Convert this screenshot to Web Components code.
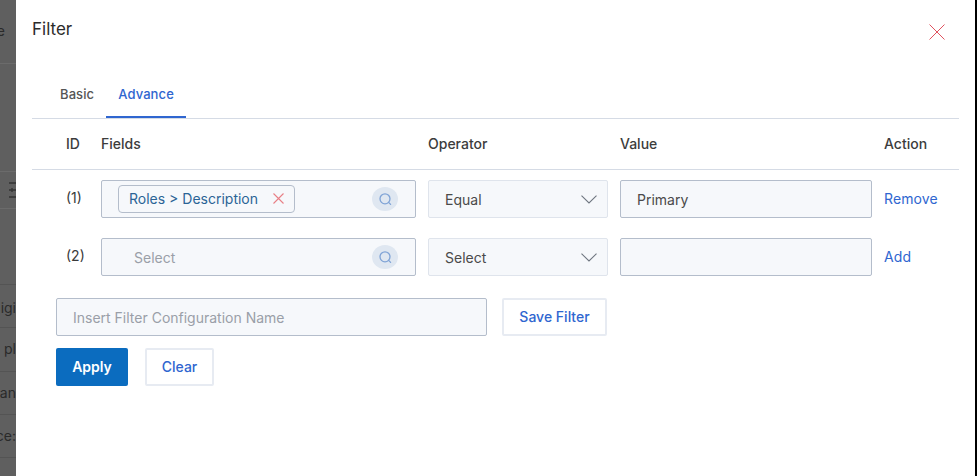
<!DOCTYPE html>
<html>
<head>
<meta charset="utf-8">
<title>Filter</title>
<style>
  html, body { margin: 0; padding: 0; height: 100%; overflow: hidden; background: #000; }
  body { font-family: Inter, "Liberation Sans", sans-serif; }
</style>
</head>
<body>
<filter-page>
  <filter-modal heading="Filter">
    <filter-tabs></filter-tabs>
    <filter-table></filter-table>
    <save-row></save-row>
  </filter-modal>
</filter-page>

<script>
const SEARCH_ICON = `<svg width="15" height="15" viewBox="0 0 15 15" fill="none" stroke="#7fa3d6" stroke-width="1.3"><circle cx="7" cy="6.8" r="5"/><path d="M10.6 10.4l2 2" stroke-linecap="round"/></svg>`;
const CHEVRON = `<svg width="16" height="9" viewBox="0 0 16 9" fill="none" stroke="#6f7680" stroke-width="1.1"><path d="M.5.7L8 8l7.5-7.300"/></svg>`;

class FilterPage extends HTMLElement {
  constructor() {
    super();
    this.shadowDOM = this.attachShadow({ mode: 'open' });
    this.shadowDOM.innerHTML = `
      <style>
        :host { display: flex; width: 977px; height: 476px; background: #000; overflow: hidden; }
        .behind { width: 16px; flex: none; background: #5f5f5f; color: #2a2a2a; font: 14px Inter, sans-serif; overflow: hidden; display: flex; flex-direction: column; }
        .cell { box-sizing: border-box; border-bottom: 1px solid #6b6b6b; white-space: nowrap; display: flex; align-items: center; justify-content: flex-end; overflow: hidden; flex: none; }
        .dark { border-bottom-color: #545454; }
        .main { flex: none; width: 959px; }
      </style>
      <div class="behind">
        <div class="cell" style="height:64px;padding-right:11px;padding-bottom:3px">e</div>
        <div class="cell" style="height:108px"></div>
        <div class="cell" style="height:37px"><svg width="7" height="16" viewBox="0 0 7 16" fill="none" stroke="#333" stroke-width="1.4"><path d="M0 1h7M0 8h3M3 6v4M3 8h4M0 15h7"/></svg></div>
        <div class="cell dark" style="height:76px"></div>
        <div class="cell dark" style="height:43px;padding-top:3px">nigi</div>
        <div class="cell dark" style="height:44px;padding-bottom:3px">pl</div>
        <div class="cell dark" style="height:43px;padding-bottom:2px">an</div>
        <div class="cell dark" style="height:43px;padding-bottom:2px">ce:</div>
      </div>
      <div class="main"><slot></slot></div>`;
  }
}

class FilterModal extends HTMLElement {
  constructor() {
    super();
    this.shadowDOM = this.attachShadow({ mode: 'open' });
    this.shadowDOM.innerHTML = `
      <style>
        :host { display: block; height: 476px; background: #fff; padding: 0 16px; box-sizing: border-box; }
        header { height: 63px; display: flex; justify-content: space-between; }
        h1 { margin: 18px 0 0; font: 400 17px/22px Inter, sans-serif; color: #2b2b2b; }
        button { border: 0; background: none; padding: 0; margin: 24px 14px 0 0; width: 16px; height: 16px; }
      </style>
      <header>
        <h1>${this.getAttribute('heading')}</h1>
        <button aria-label="Close"><svg width="16" height="16" viewBox="0 0 16 16" stroke="#e0525f" stroke-width="1"><path d="M.5.5l15 15M15.500.5l-15 15"/></svg></button>
      </header>
      <slot></slot>`;
  }
}

class FilterTabs extends HTMLElement {
  constructor() {
    super();
    this.shadowDOM = this.attachShadow({ mode: 'open' });
    this.shadowDOM.innerHTML = `
      <style>
        :host { display: flex; height: 55px; border-bottom: 1px solid #d5dbe5; box-sizing: content-box; padding-left: 16px; font: 500 13px/16px Inter, sans-serif; letter-spacing: .1px; }
        div { padding: 23px 12px 0; color: #555; height: 55px; box-sizing: border-box; }
        .active { color: #2f66d0; border-bottom: 2px solid #2f66d0; }
      </style>
      <div>Basic</div><div class="active">Advance</div>`;
  }
}

class FilterTable extends HTMLElement {
  constructor() {
    super();
    this.shadowDOM = this.attachShadow({ mode: 'open' });
    this.shadowDOM.innerHTML = `
      <style>
        :host { display: block; font: 400 14px/18px Inter, sans-serif; color: #3a3a3a; }
        .grid { display: grid; grid-template-columns: 57px 315px 180px 252px 1fr; column-gap: 12px; align-items: center; }
        .head { height: 50px; border-bottom: 1px solid #d5dbe5; font-weight: 500; color: #3c3c3c; }
        .row { height: 38px; margin-top: 10px; }
        .row + .row { margin-top: 20px; }
        .id { padding-left: 34px; white-space: nowrap; }
        .row .id { margin-top: -2px; }
        .box { height: 38px; box-sizing: border-box; background: #f6f8fb; border: 1px solid #b4bdcb; border-radius: 2px; display: flex; align-items: center; justify-content: space-between; padding: 0 16px; color: #4a4a4a; }
        .label { padding-top: 1px; }
        .select { border-color: #dfe4ec; padding-right: 10px; }
        .fields { padding: 0 17px 0 16px; }
        .fields.empty { padding-left: 32px; color: #9a9fa8; }
        .round { width: 26px; height: 24px; border-radius: 50%; background: #dfe7f1; display: flex; align-items: center; justify-content: center; }
        .chip { display: flex; align-items: center; gap: 15px; height: 28px; box-sizing: border-box; border: 1px solid #b4bdcb; border-radius: 4px; padding: 0 10px; color: #2b6496; margin-top: -1px; }
        .action { color: #2f66d0; letter-spacing: .1px; margin-top: -1px; }
      </style>
      <div class="grid head">
        <div class="id">ID</div><div>Fields</div><div>Operator</div><div>Value</div><div>Action</div>
      </div>
      <div class="grid row">
        <div class="id">(1)</div>
        <div class="box fields">
          <span class="chip">Roles &gt; Description <svg width="11" height="11" viewBox="0 0 11 11" stroke="#e87f86" stroke-width="1.1"><path d="M.5.5l10 10M10.500.5l-10 10"/></svg></span>
          <span class="round">${SEARCH_ICON}</span>
        </div>
        <div class="box select"><span class="label">Equal</span> ${CHEVRON}</div>
        <div class="box"><span class="label">Primary</span></div>
        <div class="action">Remove</div>
      </div>
      <div class="grid row">
        <div class="id">(2)</div>
        <div class="box fields empty"><span class="label">Select</span> <span class="round">${SEARCH_ICON}</span></div>
        <div class="box select"><span class="label">Select</span> ${CHEVRON}</div>
        <div class="box"></div>
        <div class="action">Add</div>
      </div>`;
  }
}

class SaveRow extends HTMLElement {
  constructor() {
    super();
    this.shadowDOM = this.attachShadow({ mode: 'open' });
    this.shadowDOM.innerHTML = `
      <style>
        :host { display: block; padding: 22px 0 0 24px; font: 400 14px/18px Inter, sans-serif; }
        .top, .bottom { display: flex; }
        .top { gap: 15px; margin-bottom: 12px; }
        .bottom { gap: 17px; }
        .name { width: 431px; height: 38px; box-sizing: border-box; background: #f6f8fb; border: 1px solid #b4bdcb; border-radius: 2px; padding: 1px 16px 0; display: flex; align-items: center; color: #9a9fa8; }
        .btn { height: 38px; box-sizing: border-box; display: flex; align-items: center; justify-content: center; border: 2px solid #e7ebf2; border-radius: 2px; background: #fff; color: #2f66d0; font-weight: 500; }
        .save { width: 105px; }
        .clear { width: 69px; }
        .apply { width: 72px; background: #0b6cbf; border: 0; color: #fff; font-weight: 600; }
      </style>
      <div class="top"><div class="name">Insert Filter Configuration Name</div><div class="btn save">Save Filter</div></div>
      <div class="bottom"><div class="btn apply">Apply</div><div class="btn clear">Clear</div></div>`;
  }
}

customElements.define('filter-page', FilterPage);
customElements.define('filter-modal', FilterModal);
customElements.define('filter-tabs', FilterTabs);
customElements.define('filter-table', FilterTable);
customElements.define('save-row', SaveRow);
</script>
</body>
</html>
